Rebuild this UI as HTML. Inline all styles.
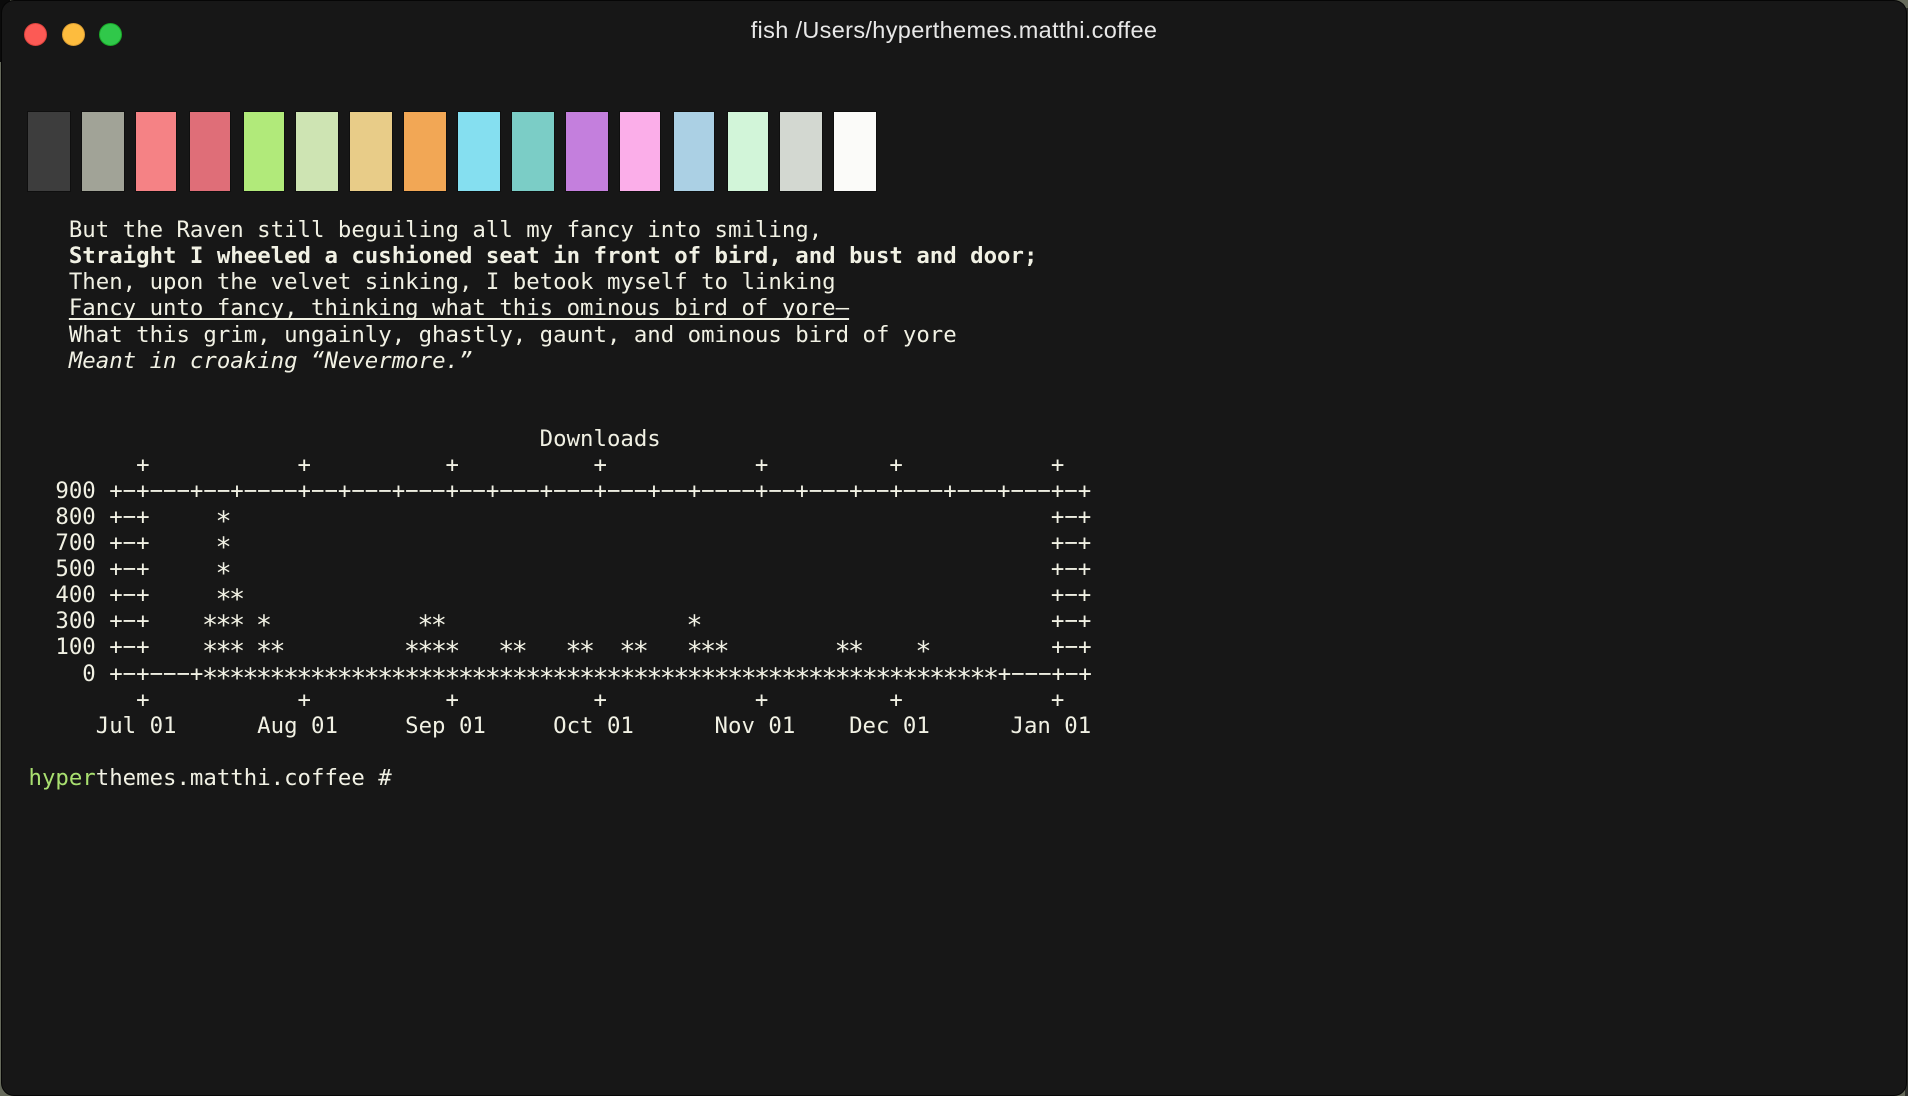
<!DOCTYPE html>
<html lang="en">
<head>
<meta charset="utf-8">
<title>fish /Users/hyperthemes.matthi.coffee</title>
<style>
html,body{margin:0;padding:0;width:1908px;height:1096px;overflow:hidden;background:#666a5b}
#win{position:absolute;left:2px;top:1px;width:1904px;height:1094px;background:#171717;border-radius:12px;box-shadow:0 0 0 1px #060606}
#cap{position:absolute;left:0;top:0;width:10px;height:62px;background:#0b0b0b}
#capr{position:absolute;right:0;top:8px;width:3px;height:1088px;background:#2d2e2a}
.l{position:absolute;width:23px;height:23px;border-radius:50%;top:23px;box-sizing:border-box}
#title{position:absolute;left:650px;width:608px;top:17px;text-align:center;font:23.5px/26px "Liberation Sans",sans-serif;letter-spacing:.34px;color:#e8e8e8;white-space:pre}
.s{position:absolute;top:112px;height:79px;box-shadow:0 0 0 1px rgba(0,0,0,.35)}
pre{position:absolute;left:28.5px;top:217.2px;margin:0;font-family:"DejaVu Sans Mono",monospace;font-size:22.35px;line-height:26.08px;color:#f1f1e4}
b{font-weight:bold}
i{font-style:italic}
u{text-decoration:underline;text-decoration-thickness:2px;text-underline-offset:3px;text-decoration-skip-ink:none}
.g{color:#a9e070}
s{text-decoration:none;font-size:26.8px;letter-spacing:-2.67px;line-height:0;position:relative;top:6px;left:-1.35px}
</style>
</head>
<body>
<div id="cap"></div>
<div id="capr"></div>
<div id="win"></div>
<div class="l" style="left:24px;background:#fc5a55;border:1px solid #e0443e"></div>
<div class="l" style="left:62px;background:#fdbc3e;border:1px solid #dea034"></div>
<div class="l" style="left:99px;background:#30c84a;border:1px solid #1aab29"></div>
<div id="title">fish /Users/hyperthemes.matthi.coffee</div>

<div class="s" style="left:28px;width:42px;background:#3d3d3d"></div>
<div class="s" style="left:82px;width:42px;background:#a1a397"></div>
<div class="s" style="left:136px;width:40px;background:#f58285"></div>
<div class="s" style="left:190px;width:40px;background:#df6e78"></div>
<div class="s" style="left:244px;width:40px;background:#b1ea7a"></div>
<div class="s" style="left:296px;width:42px;background:#cee4b3"></div>
<div class="s" style="left:350px;width:42px;background:#e8cc88"></div>
<div class="s" style="left:404px;width:42px;background:#f2a755"></div>
<div class="s" style="left:458px;width:42px;background:#85dff0"></div>
<div class="s" style="left:512px;width:42px;background:#7bcdc6"></div>
<div class="s" style="left:566px;width:42px;background:#c47fdd"></div>
<div class="s" style="left:620px;width:40px;background:#fbaee9"></div>
<div class="s" style="left:674px;width:40px;background:#abd0e4"></div>
<div class="s" style="left:728px;width:40px;background:#d2f5d9"></div>
<div class="s" style="left:780px;width:42px;background:#d3d8d1"></div>
<div class="s" style="left:834px;width:42px;background:#fbfbf9"></div>

<pre>   But the Raven still beguiling all my fancy into smiling,
   <b>Straight I wheeled a cushioned seat in front of bird, and bust and door;</b>
   Then, upon the velvet sinking, I betook myself to linking
   <u>Fancy unto fancy, thinking what this ominous bird of yore—</u>
   What this grim, ungainly, ghastly, gaunt, and ominous bird of yore
   <i>Meant in croaking “Nevermore.”</i>


                                      Downloads
        +           +          +          +           +         +           +
  900 +−+−−−+−−+−−−−+−−+−−−+−−−+−−+−−−+−−−+−−−+−−+−−−−+−−+−−−+−−+−−−+−−−+−−−+−+
  800 +−+     <s>*</s>                                                             +−+
  700 +−+     <s>*</s>                                                             +−+
  500 +−+     <s>*</s>                                                             +−+
  400 +−+     <s>**</s>                                                            +−+
  300 +−+    <s>***</s> <s>*</s>           <s>**</s>                  <s>*</s>                          +−+
  100 +−+    <s>***</s> <s>**</s>         <s>****</s>   <s>**</s>   <s>**</s>  <s>**</s>   <s>***</s>        <s>**</s>    <s>*</s>         +−+
    0 +−+−−−+<s>***********************************************************</s>+−−−+−+
        +           +          +          +           +         +           +
     Jul 01      Aug 01     Sep 01     Oct 01      Nov 01    Dec 01      Jan 01

<span class="g">hyper</span>themes.matthi.coffee #</pre>
</body>
</html>
